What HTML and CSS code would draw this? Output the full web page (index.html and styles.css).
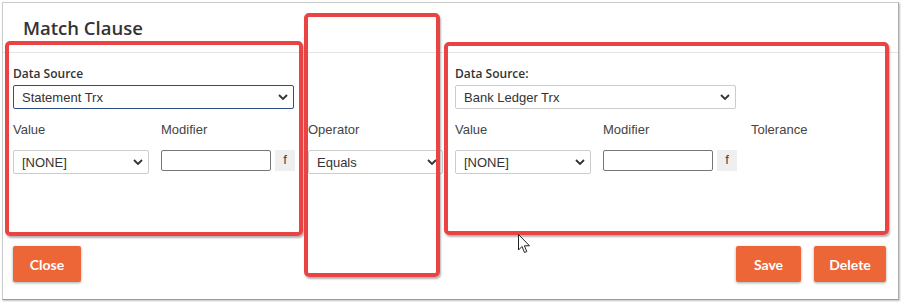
FILE: index.html
```html
<!DOCTYPE html>
<html lang="en">

<head>
	<meta charset="UTF-8">
	<meta name="viewport" content="width=device-width, initial-scale=1.0">
	<title>Match Clause</title>
	<link rel="stylesheet" href="styles.css">
</head>

<body>
	<div class="modal">
		<!--header-->
		<div class="modal__header">
			<h4 class="modal__title">Match Clause</h4>
		</div>
		<!--body-->
		<div class="modal__body">
			<div class="col col--side">
				<div class="label label--strong">Data Source</div>
				<div class="select select--wide select--focus">
					<span>Statement Trx</span>
					<svg class="chev" width="10" height="6" viewBox="0 0 10 6"><path d="M1 1 L5 5 L9 1" /></svg>
				</div>
				<div class="fields">
					<div class="field">
						<div class="label">Value</div>
						<div class="select select--small">
							<span>[NONE]</span>
							<svg class="chev" width="10" height="6" viewBox="0 0 10 6"><path d="M1 1 L5 5 L9 1" /></svg>
						</div>
					</div>
					<div class="field">
						<div class="label">Modifier</div>
						<div class="modifier">
							<div class="input"></div>
							<div class="fn">f</div>
						</div>
					</div>
				</div>
			</div>

			<div class="col col--op">
				<div class="label">Operator</div>
				<div class="select select--op">
					<span>Equals</span>
					<svg class="chev" width="10" height="6" viewBox="0 0 10 6"><path d="M1 1 L5 5 L9 1" /></svg>
				</div>
			</div>

			<div class="col col--side">
				<div class="label label--strong">Data Source:</div>
				<div class="select select--wide">
					<span>Bank Ledger Trx</span>
					<svg class="chev" width="10" height="6" viewBox="0 0 10 6"><path d="M1 1 L5 5 L9 1" /></svg>
				</div>
				<div class="fields">
					<div class="field">
						<div class="label">Value</div>
						<div class="select select--small">
							<span>[NONE]</span>
							<svg class="chev" width="10" height="6" viewBox="0 0 10 6"><path d="M1 1 L5 5 L9 1" /></svg>
						</div>
					</div>
					<div class="field">
						<div class="label">Modifier</div>
						<div class="modifier">
							<div class="input"></div>
							<div class="fn">f</div>
						</div>
					</div>
					<div class="field">
						<div class="label">Tolerance</div>
					</div>
				</div>
			</div>
		</div>
		<!--footer-->
		<div class="modal__footer">
			<button class="btn btn--close">Close</button>
			<div class="spacer"></div>
			<button class="btn btn--save">Save</button>
			<button class="btn btn--delete">Delete</button>
		</div>

		<!--annotation marks-->
		<div class="mark mark--left"></div>
		<div class="mark mark--mid"></div>
		<div class="mark mark--right"></div>
		<svg class="cursor" width="13" height="20" viewBox="0 0 13 20">
			<path d="M0.5 0.5 L0.5 16 L4 12.5 L6.5 18.5 L8.8 17.5 L6.4 11.8 L11.5 11.8 Z" />
		</svg>
	</div>
</body>

</html>
```

FILE: styles.css
```css
* {
	margin: 0;
	padding: 0;
	box-sizing: border-box;
}

body {
	background: #fff;
	font-family: "Liberation Sans", Arial, sans-serif;
	font-size: 13px;
	color: #333;
}

.modal {
	position: relative;
	margin: 2px;
	width: 897px;
	height: 298px;
	border: solid 1px #ccc;
	border-right-color: #aaa;
	border-bottom-color: #999;
	box-shadow: 1px 1px 2px rgba(0, 0, 0, .25);
	background: #fff;
}

.modal__header {
	height: 50px;
	border-bottom: solid 1px #e5e5e5;
	padding: 12px 0 0 20px;
}

.modal__title {
	font-family: "Open Sans", sans-serif;
	font-weight: 600;
	font-size: 18.5px;
	line-height: 26px;
	color: #333;
}

.modal__body {
	display: flex;
	height: 121px;
	padding: 12px 0 0 10px;
}

.col--side {
	width: 282px;
	flex-shrink: 0;
}

.col--op {
	width: 135px;
	flex-shrink: 0;
	margin: 0 12px 0 13px;
	padding-top: 57px;
}

.label {
	height: 16px;
	line-height: 16px;
	color: #444;
}

.label--strong {
	font-family: "Open Sans", sans-serif;
	font-weight: 600;
	font-size: 12px;
	height: 17px;
	line-height: 17px;
	color: #333;
	margin-bottom: 3px;
}

.select {
	display: flex;
	align-items: center;
	justify-content: space-between;
	height: 24px;
	padding: 0 5px 0 8px;
	border: solid 1px #ccc;
	border-radius: 2px;
	background: #fff;
	color: #333;
}

.select--focus {
	border-color: #2c4f86;
}

.select--wide {
	width: 281px;
}

.select--small {
	width: 136px;
}

.select--op {
	width: 135px;
	margin-top: 12px;
}

.chev {
	fill: none;
	stroke: #333;
	stroke-width: 1.8;
}

.fields {
	display: flex;
	margin-top: 13px;
}

.field {
	width: 148px;
	flex-shrink: 0;
}

.field .select,
.field .modifier {
	margin-top: 12px;
}

.modifier {
	display: flex;
}

.input {
	width: 110px;
	height: 21px;
	border: solid 1px #767676;
	border-radius: 2px;
}

.fn {
	width: 20px;
	height: 21px;
	margin-left: 4px;
	line-height: 20px;
	text-align: center;
	background: #efefef;
	color: #444;
}

.modal__footer {
	display: flex;
	gap: 13px;
	padding: 72px 12px 0 10px;
}

.spacer {
	flex: 1;
}

.btn {
	height: 36px;
	border: none;
	border-radius: 2px;
	background: #ec6637;
	color: #fff;
	font-family: Lato, sans-serif;
	font-weight: 700;
	font-size: 14px;
	text-align: center;
	box-shadow: 0 1px 3px rgba(0, 0, 0, .35);
}

.btn--close {
	width: 68px;
}

.btn--save {
	width: 65px;
}

.btn--delete {
	width: 72px;
}

.mark {
	position: absolute;
	border: solid 4px #e94343;
	border-radius: 5px;
	box-shadow: 1px 2px 2px rgba(0, 0, 0, .3);
}

.mark--left {
	left: 2px;
	top: 38px;
	width: 298px;
	height: 195px;
}

.mark--mid {
	left: 301px;
	top: 10px;
	width: 136px;
	height: 264px;
}

.mark--right {
	left: 441px;
	top: 39px;
	width: 445px;
	height: 193px;
}

.cursor {
	position: absolute;
	left: 515px;
	top: 231px;
	fill: #fff;
	stroke: #222;
	stroke-width: 1;
}
```
